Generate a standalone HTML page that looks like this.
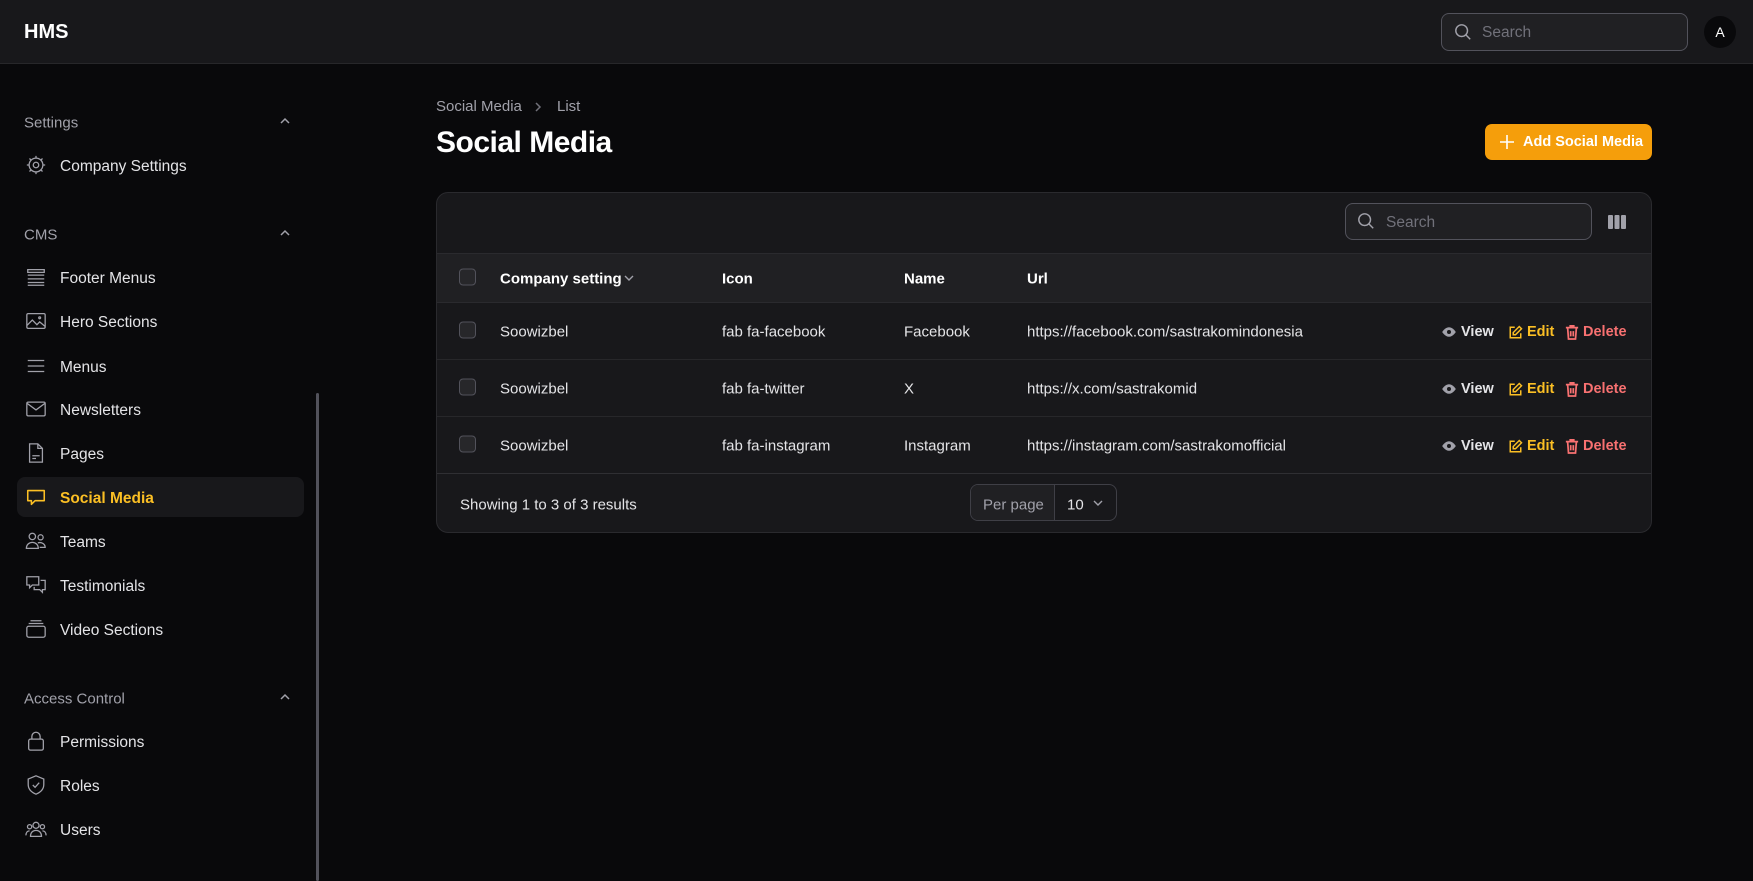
<!DOCTYPE html>
<html><head><meta charset="utf-8"><style>
*{box-sizing:border-box;margin:0;padding:0}
body{width:1753px;height:881px;background:#09090b;font-family:"Liberation Sans",sans-serif;color:#fff;position:relative;overflow:hidden;font-size:15.5px}
.abs{position:absolute}
.top{left:0;top:0;width:1753px;height:64px;background:#18181b;border-bottom:1px solid #27272a}
svg{display:block}
.nav{position:absolute;left:60px;font-size:15.5px;color:#e4e4e7;transform:translateY(calc(-50% + 2px))}
.ic{position:absolute;left:25px;width:22px;height:22px;transform:translateY(-50%)}
.grp{position:absolute;left:24px;color:#a1a1aa;font-size:15px;transform:translateY(calc(-50% + 2px))}
.chev{position:absolute;left:279px;transform:translateY(-50%)}
.cell{position:absolute;transform:translateY(calc(-50% + 2px));font-size:15px;color:#e4e4e7}
.cb{position:absolute;left:459px;width:17px;height:17px;border:1px solid #52525b;border-radius:4px;background:#27272a;transform:translateY(-50%)}
.hd{font-weight:bold;color:#fff}
.act{position:absolute;transform:translateY(calc(-50% + 2px));display:flex;align-items:center;gap:4px;font-weight:bold;font-size:14.5px}
</style></head><body>
<div class="abs top"></div>
<div class="abs" style="left:24px;top:21px;font-size:20px;font-weight:bold">HMS</div>
<div class="abs" style="left:1441px;top:13px;width:247px;height:38px;border:1px solid #52525b;border-radius:8px;background:#202023"></div>
<svg class="abs" style="left:1454px;top:23px" width="18" height="18" viewBox="0 0 20 20" fill="none" stroke="#a1a1aa" stroke-width="1.6"><circle cx="8.5" cy="8.5" r="6.5"/><path d="M13.5 13.5L18 18"/></svg>
<div class="abs" style="left:1482px;top:24px;color:#71717a;font-size:15.5px">Search</div>
<div class="abs" style="left:1704px;top:16px;width:32px;height:32px;border-radius:50%;background:#09090b;text-align:center;line-height:32px;font-size:14px">A</div>

<div class="grp" style="top:121px">Settings</div>
<svg class="chev" style="top:121px" width="12" height="8" viewBox="0 0 12 8" fill="none" stroke="#a1a1aa" stroke-width="1.5"><path d="M2 6l4-4 4 4"/></svg>
<svg class="ic" style="top:165px" viewBox="0 0 24 24" fill="none" stroke="#a1a1aa" stroke-width="1.4"><circle cx="12" cy="12" r="7.5"/><circle cx="12" cy="12" r="3"/><path d="M12 2v2.5M12 19.5V22M2 12h2.5M19.5 12H22M4.9 4.9l1.8 1.8M17.3 17.3l1.8 1.8M4.9 19.1l1.8-1.8M17.3 6.7l1.8-1.8"/></svg>
<div class="nav" style="top:165px">Company Settings</div>

<div class="grp" style="top:233px">CMS</div>
<svg class="chev" style="top:233px" width="12" height="8" viewBox="0 0 12 8" fill="none" stroke="#a1a1aa" stroke-width="1.5"><path d="M2 6l4-4 4 4"/></svg>
<svg class="ic" style="top:277px" viewBox="0 0 24 24" fill="none" stroke="#a1a1aa" stroke-width="1.4"><path d="M3 4h18v3H3zM3 10h18M3 14h18M3 18h18M3 21h18"/></svg>
<div class="nav" style="top:277px">Footer Menus</div>
<svg class="ic" style="top:321px" viewBox="0 0 24 24" fill="none" stroke="#a1a1aa" stroke-width="1.4"><rect x="2" y="4" width="20" height="16" rx="1.5"/><path d="M2 17l6-6 5 5 3-3 6 5"/><circle cx="16" cy="8.5" r="1"/></svg>
<div class="nav" style="top:321px">Hero Sections</div>
<svg class="ic" style="top:366px" viewBox="0 0 24 24" fill="none" stroke="#a1a1aa" stroke-width="1.4"><path d="M3 6h18M3 12h18M3 18h18"/></svg>
<div class="nav" style="top:366px">Menus</div>
<svg class="ic" style="top:409px" viewBox="0 0 24 24" fill="none" stroke="#a1a1aa" stroke-width="1.4"><rect x="2" y="4.5" width="20" height="15" rx="1.5"/><path d="M2.5 6l9.5 7 9.5-7"/></svg>
<div class="nav" style="top:409px">Newsletters</div>
<svg class="ic" style="top:453px" viewBox="0 0 24 24" fill="none" stroke="#a1a1aa" stroke-width="1.4"><path d="M5 2h9l5 5v15H5z"/><path d="M14 2v5h5M8 15h8M8 18h4"/></svg>
<div class="nav" style="top:453px">Pages</div>
<div class="abs" style="left:17px;top:477px;width:287px;height:40px;background:#18181b;border-radius:8px"></div>
<svg class="ic" style="top:497px" viewBox="0 0 24 24" fill="none" stroke="#fbbf24" stroke-width="1.7"><path d="M3 5h18v11H11l-4 4v-4H3z" stroke-linejoin="round"/></svg>
<div class="nav" style="top:497px;color:#fbbf24;font-weight:bold">Social Media</div>
<svg class="ic" style="top:541px" viewBox="0 0 24 24" fill="none" stroke="#a1a1aa" stroke-width="1.4"><circle cx="8" cy="7" r="3.5"/><circle cx="17" cy="8" r="2.8"/><path d="M1.5 20c0-4 3-6.5 6.5-6.5s6.5 2.5 6.5 6.5zM14 14c4-1 8 1 8 5h-6"/></svg>
<div class="nav" style="top:541px">Teams</div>
<svg class="ic" style="top:585px" viewBox="0 0 24 24" fill="none" stroke="#a1a1aa" stroke-width="1.4"><path d="M2 3h13v9H8l-3 3v-3H2z"/><path d="M17 7h5v10h-3v3l-3-3h-6v-3"/></svg>
<div class="nav" style="top:585px">Testimonials</div>
<svg class="ic" style="top:629px" viewBox="0 0 24 24" fill="none" stroke="#a1a1aa" stroke-width="1.4"><rect x="2" y="9" width="20" height="12" rx="2"/><path d="M4 6h16M6 3h12"/></svg>
<div class="nav" style="top:629px">Video Sections</div>

<div class="grp" style="top:697px">Access Control</div>
<svg class="chev" style="top:697px" width="12" height="8" viewBox="0 0 12 8" fill="none" stroke="#a1a1aa" stroke-width="1.5"><path d="M2 6l4-4 4 4"/></svg>
<svg class="ic" style="top:741px" viewBox="0 0 24 24" fill="none" stroke="#a1a1aa" stroke-width="1.4"><rect x="4" y="10" width="16" height="12" rx="2"/><path d="M7.5 10V7a4.5 4.5 0 019 0v3"/></svg>
<div class="nav" style="top:741px">Permissions</div>
<svg class="ic" style="top:785px" viewBox="0 0 24 24" fill="none" stroke="#a1a1aa" stroke-width="1.4"><path d="M12 2l8.5 3.5v6c0 5-3.5 8.5-8.5 10.5C7 20 3.5 16.5 3.5 11.5v-6z"/><path d="M8.5 12l2.5 2.5 4.5-5"/></svg>
<div class="nav" style="top:785px">Roles</div>
<svg class="ic" style="top:829px" viewBox="0 0 24 24" fill="none" stroke="#a1a1aa" stroke-width="1.4"><circle cx="12" cy="8" r="3.3"/><circle cx="5" cy="9.5" r="2.3"/><circle cx="19" cy="9.5" r="2.3"/><path d="M6 20c0-4 2.5-6.5 6-6.5s6 2.5 6 6.5zM1 19c0-3 1.5-5 4-5M23 19c0-3-1.5-5-4-5"/></svg>
<div class="nav" style="top:829px">Users</div>
<div class="abs" style="left:316px;top:393px;width:3px;height:488px;background:#52525b;border-radius:2px"></div>

<div class="abs" style="left:436px;top:98px;font-size:15px;color:#a1a1aa">Social Media</div>
<svg class="abs" style="left:533px;top:101px" width="10" height="12" viewBox="0 0 10 12" fill="none" stroke="#71717a" stroke-width="1.5"><path d="M3 2l4 4-4 4"/></svg>
<div class="abs" style="left:557px;top:98px;font-size:15px;color:#a1a1aa">List</div>
<div class="abs" style="left:436px;top:126px;font-size:30px;font-weight:bold;letter-spacing:-0.5px">Social Media</div>
<div class="abs" style="left:1485px;top:124px;width:167px;height:36px;background:#f59e0b;border-radius:7px"></div>
<svg class="abs" style="left:1499px;top:134px" width="16" height="16" viewBox="0 0 16 16" stroke="#fff" stroke-width="1.6"><path d="M8 1v14M1 8h14"/></svg>
<div class="abs" style="left:1523px;top:134px;font-size:14.5px;font-weight:bold">Add Social Media</div>

<div class="abs" style="left:436px;top:192px;width:1216px;height:341px;background:#18181b;border:1px solid #2a2a2e;border-radius:12px;overflow:hidden">
 <div class="abs" style="left:0;top:60px;width:1216px;height:50px;background:#202023;border-top:1px solid #2a2a2e;border-bottom:1px solid #2a2a2e"></div>
 <div class="abs" style="left:0;top:166px;width:1216px;height:1px;background:#27272a"></div>
 <div class="abs" style="left:0;top:223px;width:1216px;height:1px;background:#27272a"></div>
 <div class="abs" style="left:0;top:280px;width:1216px;height:1px;background:#2f2f33"></div>
</div>
<div class="abs" style="left:1345px;top:203px;width:247px;height:37px;border:1px solid #52525b;border-radius:8px;background:#202023"></div>
<svg class="abs" style="left:1357px;top:212px" width="18" height="18" viewBox="0 0 20 20" fill="none" stroke="#a1a1aa" stroke-width="1.6"><circle cx="8.5" cy="8.5" r="6.5"/><path d="M13.5 13.5L18 18"/></svg>
<div class="abs" style="left:1386px;top:214px;color:#71717a;font-size:15.5px">Search</div>
<svg class="abs" style="left:1608px;top:214px" width="18" height="16" viewBox="0 0 18 16" fill="#a1a1aa"><rect x="0" y="1" width="5" height="14" rx="1"/><rect x="6.5" y="1" width="5" height="14" rx="1"/><rect x="13" y="1" width="5" height="14" rx="1"/></svg>

<div class="cb" style="top:277px"></div>
<div class="cell hd" style="left:500px;top:277px">Company setting</div>
<svg class="abs" style="left:623px;top:274px" width="12" height="8" viewBox="0 0 12 8" fill="none" stroke="#a1a1aa" stroke-width="1.4"><path d="M2 2l4 4 4-4"/></svg>
<div class="cell hd" style="left:722px;top:277px">Icon</div>
<div class="cell hd" style="left:904px;top:277px">Name</div>
<div class="cell hd" style="left:1027px;top:277px">Url</div>

<div class="cb" style="top:330px"></div><div class="cell" style="left:500px;top:330px">Soowizbel</div><div class="cell" style="left:722px;top:330px">fab fa-facebook</div><div class="cell" style="left:904px;top:330px">Facebook</div><div class="cell" style="left:1027px;top:330px">https://facebook.com/sastrakomindonesia</div>
<div class="cb" style="top:387px"></div><div class="cell" style="left:500px;top:387px">Soowizbel</div><div class="cell" style="left:722px;top:387px">fab fa-twitter</div><div class="cell" style="left:904px;top:387px">X</div><div class="cell" style="left:1027px;top:387px">https://x.com/sastrakomid</div>
<div class="cb" style="top:444px"></div><div class="cell" style="left:500px;top:444px">Soowizbel</div><div class="cell" style="left:722px;top:444px">fab fa-instagram</div><div class="cell" style="left:904px;top:444px">Instagram</div><div class="cell" style="left:1027px;top:444px">https://instagram.com/sastrakomofficial</div>

<div class="act" style="left:1441px;top:330px;color:#e4e4e7"><svg width="16" height="16" viewBox="0 0 20 20" fill="#a1a1aa"><path d="M10 4C5 4 1.5 10 1.5 10S5 16 10 16s8.5-6 8.5-6S15 4 10 4z"/><circle cx="10" cy="10" r="2.5" fill="#18181b"/></svg>View</div>
<div class="act" style="left:1508px;top:330px;color:#fbbf24"><svg width="15" height="15" viewBox="0 0 20 20" fill="none" stroke="#fbbf24" stroke-width="2"><path d="M9 3H3v14h14v-6"/><path d="M15 2l3 3-8 8H7v-3z"/></svg>Edit</div>
<div class="act" style="left:1565px;top:330px;color:#f87171"><svg width="14" height="16" viewBox="0 0 16 18" fill="none" stroke="#f87171" stroke-width="2"><path d="M1 4h14M6 4V2h4v2M3 4l1 13h8l1-13M6.5 8v6M9.5 8v6"/></svg>Delete</div>
<div class="act" style="left:1441px;top:387px;color:#e4e4e7"><svg width="16" height="16" viewBox="0 0 20 20" fill="#a1a1aa"><path d="M10 4C5 4 1.5 10 1.5 10S5 16 10 16s8.5-6 8.5-6S15 4 10 4z"/><circle cx="10" cy="10" r="2.5" fill="#18181b"/></svg>View</div>
<div class="act" style="left:1508px;top:387px;color:#fbbf24"><svg width="15" height="15" viewBox="0 0 20 20" fill="none" stroke="#fbbf24" stroke-width="2"><path d="M9 3H3v14h14v-6"/><path d="M15 2l3 3-8 8H7v-3z"/></svg>Edit</div>
<div class="act" style="left:1565px;top:387px;color:#f87171"><svg width="14" height="16" viewBox="0 0 16 18" fill="none" stroke="#f87171" stroke-width="2"><path d="M1 4h14M6 4V2h4v2M3 4l1 13h8l1-13M6.5 8v6M9.5 8v6"/></svg>Delete</div>
<div class="act" style="left:1441px;top:444px;color:#e4e4e7"><svg width="16" height="16" viewBox="0 0 20 20" fill="#a1a1aa"><path d="M10 4C5 4 1.5 10 1.5 10S5 16 10 16s8.5-6 8.5-6S15 4 10 4z"/><circle cx="10" cy="10" r="2.5" fill="#18181b"/></svg>View</div>
<div class="act" style="left:1508px;top:444px;color:#fbbf24"><svg width="15" height="15" viewBox="0 0 20 20" fill="none" stroke="#fbbf24" stroke-width="2"><path d="M9 3H3v14h14v-6"/><path d="M15 2l3 3-8 8H7v-3z"/></svg>Edit</div>
<div class="act" style="left:1565px;top:444px;color:#f87171"><svg width="14" height="16" viewBox="0 0 16 18" fill="none" stroke="#f87171" stroke-width="2"><path d="M1 4h14M6 4V2h4v2M3 4l1 13h8l1-13M6.5 8v6M9.5 8v6"/></svg>Delete</div>

<div class="cell" style="left:460px;top:503px">Showing 1 to 3 of 3 results</div>
<div class="abs" style="left:970px;top:484px;width:147px;height:37px;border:1px solid #3f3f46;border-radius:8px;background:#18181b;overflow:hidden">
 <div class="abs" style="left:0;top:0;width:84px;height:37px;background:#202023;border-right:1px solid #3f3f46"></div>
</div>
<div class="cell" style="left:983px;top:503px;color:#a1a1aa">Per page</div>
<div class="cell" style="left:1067px;top:503px">10</div>
<svg class="abs" style="left:1092px;top:499px" width="12" height="8" viewBox="0 0 12 8" fill="none" stroke="#a1a1aa" stroke-width="1.4"><path d="M2 2l4 4 4-4"/></svg>
</body></html>
